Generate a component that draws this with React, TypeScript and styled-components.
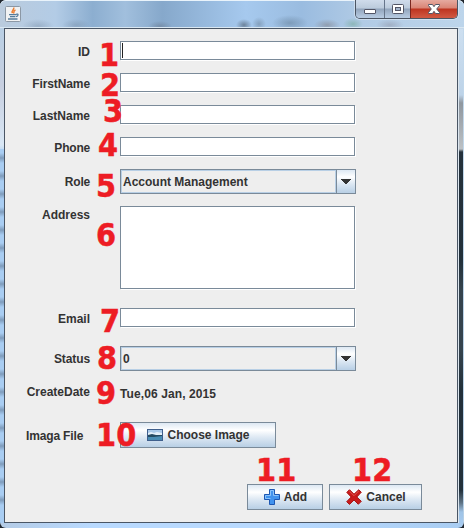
import React from 'react';
import styled, { createGlobalStyle } from 'styled-components';

const Global = createGlobalStyle`
  * { box-sizing: border-box; }
  body { margin: 0; overflow: hidden; background: #20262e; font: bold 12px/14px "Liberation Sans", Arial, sans-serif; color: #333; }
`;

const Frame = styled.main`
  position: relative;
  width: 464px;
  height: 528px;
  padding: 0 6px 5px 4px;
  border-radius: 6px;
  background:
    linear-gradient(#dce6ef, #dce6ef) 458px 29px / 1px 494px no-repeat,
    linear-gradient(#c3d9ec, #b5cfe6) 463px 0 / 1px 100% no-repeat,
    linear-gradient(#0000 0, #0000 28px, #cddff0 29px, #bdd3e8 95px, #8f979f 103px, #bcc1c5 149px, #25313b 152px, #22303a 260px, #35434d 290px, #35434d 350px, #22303a 390px, #22303a 490px, #5f7486 503px, #9fc3e6 512px, #a9cdf2 528px) 459px 0 / 4px 100% no-repeat,
    repeating-linear-gradient(#a9cdf2 0 4px, #7f9cbc 9px, #a9cdf2 14px 18px) 0 149px / 4px 360px no-repeat,
    linear-gradient(90deg, #b4cbe5, #b9daff 20%, #b9daff 60%, #a9cdf2) 0 100% / 100% 5px no-repeat,
    linear-gradient(#b9cfe4 28px, #c7cfe0 85px, #d9e7f5 145px, #a9cdf2 155px);
`;

const TitleBar = styled.header`
  display: flex;
  justify-content: space-between;
  height: 28px;
  margin: 0 -6px 0 -4px;
  padding: 0 6px 0 5px;
  border-top: 1px solid #e9f3fb;
  border-bottom: 1px solid #d9e7f2;
  border-radius: 6px 6px 0 0;
  background:
    radial-gradient(ellipse 8px 6px at 244px 24px, #5d7186cc, #0000),
    radial-gradient(ellipse 7px 7px at 259px 23px, #6b82998c, #0000),
    radial-gradient(ellipse 18px 8px at 290px 22px, #728fabbb, #0000),
    radial-gradient(ellipse 13px 6px at 327px 24px, #84868f99, #0000),
    radial-gradient(ellipse 10px 6px at 353px 23px, #77ab9d99, #0000),
    radial-gradient(ellipse 14px 6px at 390px 24px, #8d92a480, #0000),
    radial-gradient(ellipse 16px 7px at 38px 25px, #7187a066, #0000),
    radial-gradient(ellipse 14px 6px at 76px 24px, #7187a066, #0000),
    radial-gradient(ellipse 12px 5px at 160px 25px, #7187a0bb, #0000),
    linear-gradient(90deg, #bacbdd, #b3cce6 12%, #8caed0 20%, #a1bfdd 27%, #86a8cb 35%, #a6c9ee 53%, #9abce0 65%, #b1cbe5 78%, #bdd5eb);
`;

const AppIcon = styled.svg`
  width: 16px;
  height: 16px;
  margin-top: 5px;
`;

const Controls = styled.div`
  display: flex;
  width: 103px;
  height: 19px;
  margin-top: -1px;
  border: 1px solid #4b5563;
  border-top: 0;
  border-radius: 0 0 5px 5px;
  box-shadow: 0 0 0 1px #e4edf688;
  overflow: hidden;
`;

const Control = styled.button<{ $w: number; $close?: boolean }>`
  display: grid;
  place-items: center;
  width: ${p => p.$w}px;
  height: 18px;
  padding: 0;
  border: 0;
  border-left: 1px solid ${p => (p.$close ? '#7b2720' : '#66758a')};
  background: ${p => p.$close
    ? 'linear-gradient(#e5aaa0 0, #d98475 8px, #bd3420 9px, #cf5640 17px)'
    : 'linear-gradient(#d0dceb 0, #bccbdc 8px, #92a5bc 9px, #b5c9df 17px)'};
  &:first-child { border-left: 0; }
`;

const Content = styled.section`
  width: 454px;
  height: 495px;
  padding: 12px 34px 0 21px;
  border: 1px solid #4a5665;
  background: #eee;
`;

const Row = styled.div<{ $gap: number; $h: number }>`
  display: grid;
  grid-template-columns: 64px 236px;
  column-gap: 30px;
  height: ${p => p.$h}px;
  margin-top: ${p => p.$gap}px;
`;

const Label = styled.label<{ $top: number; $left?: boolean; $track?: number }>`
  padding-top: ${p => p.$top}px;
  text-align: ${p => (p.$left ? 'left' : 'right')};
  letter-spacing: ${p => p.$track ?? 0}px;
  white-space: nowrap;
`;

const Field = styled.div<{ $caret?: boolean }>`
  width: 235px;
  height: 100%;
  padding: 1px;
  border: 1px solid #7a8a99;
  background: #fff;
  box-shadow: 1px 1px 0 #fff;
  &::before {
    content: '';
    display: ${p => (p.$caret ? 'block' : 'none')};
    width: 1px;
    height: 15px;
    background: #222;
  }
`;

const Combo = styled.div`
  display: flex;
  height: 25px;
  border: 1px solid #7a8a99;
`;

const ComboValue = styled.span`
  flex: 1;
  padding: 4px 1px;
  border: 1px solid #b8cfe5;
`;

const ComboArrow = styled.span`
  display: grid;
  place-items: center;
  width: 19px;
  border-left: 1px solid #7a8a99;
  background: linear-gradient(#dde8f3, #fff 30%, #dde8f3 60%, #b8cfe5);
`;

const DateText = styled.span`
  padding-top: 5px;
  letter-spacing: 0.1px;
`;

const Button = styled.button<{ $w: number }>`
  display: flex;
  align-items: center;
  justify-content: center;
  gap: 4px;
  width: ${p => p.$w}px;
  height: 26px;
  padding: 0 0 0 1px;
  border: 1px solid #7a8a99;
  background: linear-gradient(#dde8f3, #fff 30%, #dde8f3 60%, #b8cfe5);
  color: #333;
  font: inherit;
`;

const Actions = styled.footer`
  display: flex;
  gap: 6px;
  margin: 36px 0 0 221px;
`;

const Marker = styled.span<{ $x: number; $y: number }>`
  position: absolute;
  left: ${p => p.$x}px;
  top: ${p => p.$y}px;
  color: #ed1c24;
  font: bold 32px/24px "DejaVu Sans Condensed", "DejaVu Sans", sans-serif;
  font-stretch: condensed;
  letter-spacing: 0.3px;
  -webkit-text-stroke: 0.5px #ed1c24;
  pointer-events: none;
`;

const markers = [
  [99, 43], [100, 73], [103, 99], [98, 133], [96, 174], [96, 223],
  [100, 309], [97, 346], [96, 381], [96, 423], [256, 458], [352, 458],
];

const Arrow = () => (
  <svg width="10" height="5" shapeRendering="crispEdges"><path d="M0 0h10v1H9v1H8v1H7v1H6v1H4V4H3V3H2V2H1V1H0z" fill="#333" /></svg>
);

const Select = ({ value }: { value: string }) => (
  <Combo><ComboValue>{value}</ComboValue><ComboArrow><Arrow /></ComboArrow></Combo>
);

const PictureIcon = () => (
  <svg width="16" height="12">
    <rect x=".5" y=".5" width="15" height="11" fill="#eef4fb" stroke="#3f5f8c" />
    <path d="M1 1h14v5H1z" fill="#a9c9e9" />
    <path d="M1 4l3-1 3 1 3-1 5 1v2H1z" fill="#e5f0fa" />
    <path d="M1 6l4-1 4 1h6v3H1z" fill="#254b62" />
    <path d="M1 8h6l8-1v4H1z" fill="#4a8db4" />
  </svg>
);

const PlusIcon = () => (
  <svg width="16" height="16">
    <path d="M5.5.5h5v5h5v5h-5v5h-5v-5h-5v-5h5z" fill="#4193ee" stroke="#1d57b2" />
    <path d="M6.5 9.5h-5v-3h5v-5h3v5h5" fill="none" stroke="#8cc4fa" />
  </svg>
);

const CrossIcon = () => (
  <svg width="16" height="16">
    <path d="M3.5.7L8 5.2 12.7.8l2.6 2.4L10.8 8l4.5 4.3-3 3L8 11 3.5 15.4.7 12.7 5.2 8 .8 3.4z" fill="#c91b1b" stroke="#a51212" />
    <path d="M3.3 2L8 6.7 12.7 2" fill="none" stroke="#e2564e" />
  </svg>
);

export default function App() {
  return (
    <>
      <Global />
      <Frame>
        <TitleBar>
          <AppIcon viewBox="0 0 16 16">
            <rect x=".5" y=".5" width="15" height="15" rx="1" fill="#f1f2f3" stroke="#8c98a5" />
            <path d="M8.7 1.5c1 2.2-3 3-1.2 5.7M10.5 4C7.8 5 9.6 6 8.4 7.5" fill="none" stroke="#ec8035" strokeWidth="1.5" />
            <path d="M4 8.6h7M5 10.6h5.4M3 13h9.5M11 8.3c3-1 2.4 2 0 2.2" fill="none" stroke="#557c9b" strokeWidth="1.3" />
          </AppIcon>
          <Controls>
            <Control $w={28} aria-label="Minimize">
              <svg width="12" height="16"><rect x=".5" y="8.5" width="11" height="4" rx=".5" fill="#fff" stroke="#535666" /></svg>
            </Control>
            <Control $w={27} aria-label="Maximize">
              <svg width="12" height="16"><rect x=".5" y="3.5" width="11" height="9" rx="1" fill="#fff" stroke="#535666" /><rect x="3.5" y="6.5" width="5" height="3" fill="#a2b3ca" stroke="#535666" /></svg>
            </Control>
            <Control $w={47} $close aria-label="Close">
              <svg width="12" height="16"><path d="M.5 3.5h4L6 5.7l1.5-2.2h4v1L8.7 8l2.8 3.5v1h-4L6 10.3l-1.5 2.2h-4v-1L3.3 8 .5 4.5z" fill="#fff" stroke="#535666" /></svg>
            </Control>
          </Controls>
        </TitleBar>
        <Content>
          <Row $gap={0} $h={19}><Label $top={4}>ID</Label><Field $caret /></Row>
          <Row $gap={13} $h={19}><Label $top={4} $track={-0.1}>FirstName</Label><Field /></Row>
          <Row $gap={13} $h={19}><Label $top={4}>LastName</Label><Field /></Row>
          <Row $gap={13} $h={19}><Label $top={4} $track={-0.2}>Phone</Label><Field /></Row>
          <Row $gap={13} $h={25}><Label $top={6} $track={-0.2}>Role</Label><Select value="Account Management" /></Row>
          <Row $gap={12} $h={83}><Label $top={2}>Address</Label><Field /></Row>
          <Row $gap={19} $h={19}><Label $top={4}>Email</Label><Field /></Row>
          <Row $gap={19} $h={25}><Label $top={6} $track={-0.1}>Status</Label><Select value="0" /></Row>
          <Row $gap={11} $h={24}><Label $top={3}>CreateDate</Label><DateText>Tue,06 Jan, 2015</DateText></Row>
          <Row $gap={16} $h={26}><Label $top={7} $left $track={-0.15}>Imaga File</Label><Button $w={156}><PictureIcon />Choose Image</Button></Row>
          <Actions>
            <Button $w={76}><PlusIcon />Add</Button>
            <Button $w={93}><CrossIcon />Cancel</Button>
          </Actions>
        </Content>
        {markers.map(([x, y], i) => <Marker key={i} $x={x} $y={y}>{i + 1}</Marker>)}
      </Frame>
    </>
  );
}
